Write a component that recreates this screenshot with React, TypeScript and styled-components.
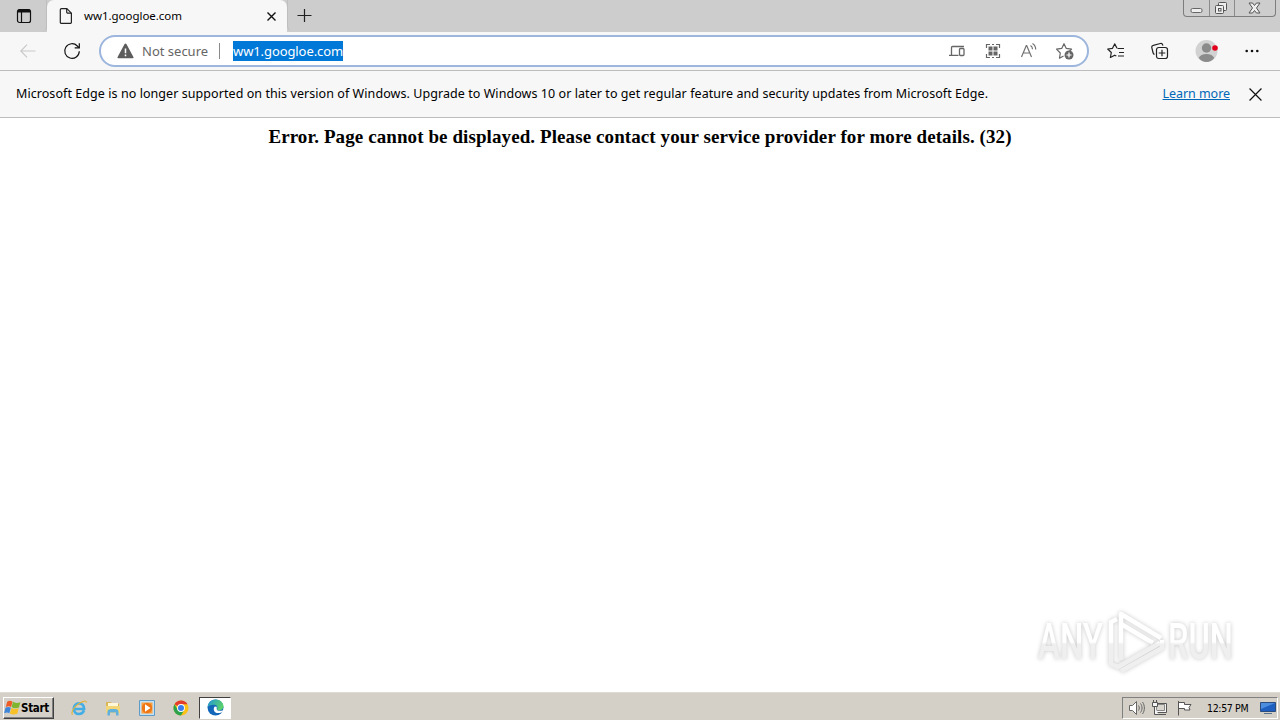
import React from 'react';
import styled, { createGlobalStyle } from 'styled-components';

const GlobalStyle = createGlobalStyle`
  * {
    box-sizing: border-box;
  }
  body {
    margin: 0;
    overflow: hidden;
    background: #fff;
  }
  svg {
    display: block;
    flex: none;
  }
`;
const Desktop = styled.div`
  width: 1280px;
  height: 720px;
  display: flex;
  flex-direction: column;
  font-family: 'Noto Sans', 'Open Sans', sans-serif;
  color: #000;
`;
const TabStrip = styled.div`
  height: 32px;
  display: flex;
  align-items: flex-start;
  background: #cdcdcd;
`;
const TabActions = styled.div`
  width: 47px;
  height: 32px;
  padding: 8px 0 0 16px;
  border-bottom-right-radius: 5px;
  border-right: 1px solid #bebebe;
`;
const Tab = styled.div`
  width: 240px;
  height: 32px;
  display: flex;
  align-items: center;
  padding: 0 9px 0 11px;
  background: #f7f7f7;
  border-radius: 7px 7px 0 0;
`;
const TabTitle = styled.span`
  flex: 1;
  margin-left: 10px;
  font-size: 11.5px;
  line-height: 16px;
  letter-spacing: -0.04px;
`;
const NewTab = styled.div`
  flex: 1;
  height: 31px;
  padding: 8px 0 0 9px;
  border-left: 1px solid #bebebe;
  border-bottom-left-radius: 5px;
`;
const WindowButtons = styled.div`
  width: 93px;
  height: 17px;
  margin-right: 4px;
  display: flex;
  border: 1px solid #7d7d7d;
  border-top: none;
  border-radius: 0 0 4px 4px;
`;
const WindowButton = styled.div<{ $width: number }>`
  width: ${props => props.$width}px;
  display: flex;
  justify-content: center;
  & + & {
    border-left: 1px solid #8b8b8b;
  }
`;
const Toolbar = styled.div`
  height: 39px;
  display: flex;
  align-items: center;
  background: #f7f7f7;
  border-bottom: 1px solid #bdbdbd;
  padding: 0 20px;
`;
const Reload = styled.div`
  margin: 0 18px 0 27px;
`;
const AddressBar = styled.div`
  width: 990px;
  height: 32px;
  display: flex;
  align-items: center;
  padding: 0 12px 0 16px;
  background: #fff;
  border: 2px solid #9db6dd;
  border-radius: 16px;
`;
const Security = styled.span`
  width: 78px;
  height: 16px;
  margin-left: 8px;
  display: flex;
  align-items: center;
  white-space: nowrap;
  color: #666;
  font-size: 13px;
  border-right: 1px solid #8a8a8a;
`;
const Url = styled.span`
  width: 110px;
  height: 20px;
  margin-left: 13px;
  background: #0078d7;
  color: #fff;
  font-size: 13px;
  line-height: 20px;
  letter-spacing: -0.09px;
  white-space: nowrap;
`;
const AddressIcons = styled.div`
  margin-left: auto;
  display: flex;
  gap: 16px;
`;
const ToolbarIcons = styled.div`
  margin-left: 17px;
  display: flex;
  align-items: center;
`;
const ToolbarIcon = styled.div<{ $gap?: number }>`
  margin-left: ${props => props.$gap || 0}px;
`;
const InfoBar = styled.div`
  height: 47px;
  display: flex;
  align-items: center;
  padding: 0 18px 0 16px;
  background: #f7f7f7;
  border-bottom: 1px solid #bdbdbd;
  font-size: 12.5px;
  line-height: 18px;
  white-space: nowrap;
`;
const InfoText = styled.span`
  flex: 1;
  letter-spacing: 0.065px;
`;
const LearnMore = styled.a`
  margin-right: 19px;
  color: #0067b8;
  letter-spacing: -0.05px;
  text-decoration: underline;
`;
const Page = styled.main`
  height: 574px;
  padding-top: 8px;
  position: relative;
  background: #fff;
`;
const Message = styled.h1`
  margin: 0;
  text-align: center;
  font-family: 'Liberation Serif', serif;
  font-size: 19px;
  line-height: 22px;
  letter-spacing: 0.09px;
  white-space: nowrap;
`;
const Watermark = styled.div`
  position: absolute;
  right: 0;
  bottom: 12px;
`;
const Taskbar = styled.div`
  height: 28px;
  display: flex;
  align-items: center;
  padding: 2px 2px 0 3px;
  background: #d4d0c8;
  border-top: 1px solid #dedbd5;
  font-family: 'DejaVu Sans Condensed', 'DejaVu Sans', sans-serif;
`;
const StartButton = styled.div`
  width: 51px;
  height: 22px;
  display: flex;
  align-items: center;
  border: 1px solid;
  border-color: #fff #404040 #404040 #fff;
  box-shadow: inset -1px -1px #808080;
  font-size: 11.5px;
  font-weight: bold;
  letter-spacing: -0.3px;
`;
const QuickLaunch = styled.div`
  display: flex;
  align-items: center;
  gap: 18px;
  margin-left: 17px;
`;
const ActiveTask = styled.div`
  width: 32px;
  height: 22px;
  margin-left: 10px;
  padding: 1px 0 0 7px;
  background: #fff;
  border: 1px solid;
  border-color: #404040 #fff #fff #404040;
`;
const Tray = styled.div`
  width: 156px;
  height: 22px;
  margin-left: auto;
  display: flex;
  align-items: center;
  padding-left: 5px;
  border: 1px solid;
  border-color: #808080 #fff #fff #808080;
`;
const Clock = styled.span`
  width: 46px;
  margin: 0 7px 0 11px;
  font-family: 'DejaVu Sans Condensed', 'DejaVu Sans', sans-serif;
  font-size: 10.5px;
  line-height: 16px;
  letter-spacing: -0.35px;
  white-space: nowrap;
`;

const CloseIcon = ({ size, stroke = 1.2 }: { size: number; stroke?: number }) => (
  <svg width={size} height={size} viewBox="0 0 12 12" fill="none" stroke="#111" strokeWidth={stroke}>
    <path d="M.5.5l11 11M11.5.5l-11 11" />
  </svg>
);

const PersonIcon = () => (
  <svg width="24" height="24" viewBox="0 0 24 24">
    <circle cx="11.5" cy="12" r="11" fill="#d2d2d2" />
    <circle cx="11.5" cy="9" r="4.7" fill="#8b8b8b" />
    <path d="M3.8 19c1-2.700 4-4 7.700-4s6.700 1.300 7.700 4c-4 5.300-11.500 5.300-15.400 0z" fill="#8b8b8b" />
    <circle cx="20" cy="9" r="2.800" fill="#e3001b" />
  </svg>
);

const WindowsLogo = () => (
  <svg width="17" height="17" viewBox="0 0 16 16">
    <path d="M3 2.500c2-1.200 3.500-1 5 0L6.700 7.600c-1.500-1-3-1-5 0z" fill="#ef5b25" />
    <path d="M8.400 2.700c2 1.200 4.200 1.300 7 .3l-1.300 5c-2.600 1.100-4.800 1-6.900-.3z" fill="#7fb52f" />
    <path d="M1.400 8.300c2-1.100 3.500-1 5 0L5.100 13.500c-1.500-1-3-1-5 0z" fill="#3f86d8" />
    <path d="M7 8.500c2 1.200 4.300 1.300 6.900.2L12.500 13.800c-2.600 1.100-4.800 1-6.900-.2z" fill="#f8c128" />
  </svg>
);

const ExplorerIcon = () => (
  <svg width="16" height="16" viewBox="0 0 16 16" fill="none">
    <path d="M13 10.600c-1 2.400-2.800 3.400-5 3.400-3 0-5.200-2.200-5.200-5.300S5 3.400 8 3.400s5.200 2.200 5.100 5.600H4" stroke="#43aee6" strokeWidth="2.700" />
    <path d="M1.500 14.700C-.5 12 3.500 6.500 8 3.500S15.700.2 15.300 2.700" stroke="#dfb43d" strokeWidth="1.200" />
  </svg>
);

const FolderIcon = () => (
  <svg width="16" height="16" viewBox="0 0 16 16">
    <path d="M1 2h5l1 1.500h7V13H1z" fill="#d9b757" />
    <path d="M3 3h10v3H3z" fill="#fff8d8" />
    <path d="M1 6h14v7H1z" fill="#f3d678" />
    <path d="M2.500 15.500v-4C2.500 9.500 4.500 9 8 9s5.500.5 5.500 2.500v4H11v-3H5v3z" fill="#5fb0dc" />
  </svg>
);

const MediaIcon = () => (
  <svg width="16" height="16" viewBox="0 0 16 16">
    <path d="M.5.500h15v15H.5z" fill="#c4e0f2" stroke="#5d9cc9" />
    <path d="M2.500 2.500h11v11h-11z" fill="#f9a040" />
    <circle cx="8" cy="8" r="5.200" fill="#ee7615" />
    <path d="M6 4.200L11.500 8 6 11.800z" fill="#fff" />
  </svg>
);

const ChromeIcon = () => (
  <svg width="16" height="16" viewBox="0 0 16 16">
    <circle cx="8" cy="8" r="7.500" fill="#fbc116" />
    <path d="M8 8L1.500 4.250A7.500 7.500 0 0 1 14.500 4.250H8z" fill="#e33b2e" />
    <path d="M1.500 4.250A7.500 7.500 0 0 0 8 15.500l3.200-5.600L8 8 4.800 9.900z" fill="#2ba24c" />
    <circle cx="8" cy="8" r="3.900" fill="#fff" />
    <circle cx="8" cy="8" r="3" fill="#3b7ded" />
  </svg>
);

const EdgeIcon = () => (
  <svg width="17" height="17" viewBox="0 0 17 17">
    <defs>
      <linearGradient id="edge-wave" x1="0" y1="0" x2="1" y2=".4">
        <stop offset="0" stopColor="#2196dc" />
        <stop offset="1" stopColor="#5ad06c" />
      </linearGradient>
    </defs>
    <circle cx="8.500" cy="8.500" r="8" fill="#1267b8" />
    <path d="M.6 8C1 3.500 4.500.5 8.700.5c4.800 0 7.800 3.500 7.800 6.700 0 2.600-2 4.100-4.200 4.100-1.600 0-2.500-.6-2.200-1.300.8-1.200.3-3.900-2.700-4.200C4 5.500 1.400 7 .6 8z" fill="url(#edge-wave)" />
    <path d="M7.800 7.400C5.500 9.800 7.200 14 11 14c2 0 3.500-.5 4.700-1.300L17 11c-1.700 1.200-7.300 1.400-7.300-1.100 0-1 .3-1.500-.2-2.200z" fill="#fff" />
  </svg>
);

const AnyRunLogo = () => (
  <svg
    width="250"
    height="76"
    viewBox="0 0 250 76"
    fill="url(#fade)"
    fontFamily="Roboto, sans-serif"
    fontSize="50"
    fontWeight="500"
    style={{ filter: 'drop-shadow(0 0 2px rgba(0,0,0,.22))' }}
  >
    <defs>
      <linearGradient id="fade" gradientUnits="userSpaceOnUse" x1="0" y1="0" x2="0" y2="76">
        <stop offset=".5" stopColor="#fff" />
        <stop offset=".53" stopColor="#efefef" />
      </linearGradient>
    </defs>
    <text x="8" y="55" textLength="65" lengthAdjust="spacingAndGlyphs">ANY</text>
    <text x="138" y="55" textLength="65" lengthAdjust="spacingAndGlyphs">RUN</text>
    <g fill="none" stroke="url(#fade)" strokeWidth="4.5" strokeLinejoin="round">
      <path d="M91 56V10l40 24" />
      <path d="M91 20l32 19" />
      <path d="M87 15l-6 3v42l7 3 42-24" />
      <path d="M91 67l41-23v-8" />
    </g>
  </svg>
);

const App = () => (
  <Desktop>
    <GlobalStyle />
    <TabStrip>
      <TabActions>
        <svg width="16" height="16" viewBox="0 0 16 16" fill="none" stroke="#111" strokeWidth="1.200">
          <rect x="1.500" y="1.500" width="13" height="13" rx="2" />
          <path d="M5.500 4v10.500" />
          <path d="M2 3h12" strokeWidth="3" />
        </svg>
      </TabActions>
      <Tab>
        <svg width="16" height="16" viewBox="0 0 16 16" fill="none" stroke="#222" strokeWidth="1.200">
          <path d="M3.500.600h5.300l4.600 4.600v9a1.200 1.200 0 0 1-1.200 1.200H3.500a1.200 1.200 0 0 1-1.200-1.200V1.800A1.200 1.200 0 0 1 3.500.600z" />
          <path d="M8.700.700V4a1.200 1.200 0 0 0 1.200 1.200h3.400" />
        </svg>
        <TabTitle>ww1.googloe.com</TabTitle>
        <svg width="14" height="12" viewBox="0 0 14 12" stroke="#111" strokeWidth="1.400">
          <path d="M3.500 2.500l8 8M11.500 2.500l-8 8" />
        </svg>
      </Tab>
      <NewTab>
        <svg width="15" height="15" viewBox="0 0 15 15" stroke="#222" strokeWidth="1.200">
          <path d="M7.500 1v13M.5 7.500h14" />
        </svg>
      </NewTab>
      <WindowButtons>
        <WindowButton $width={25}>
          <svg width="13" height="16" viewBox="0 0 13 16">
            <rect x="1" y="8.500" width="11" height="4" rx="1.500" fill="#eee" stroke="#666" />
          </svg>
        </WindowButton>
        <WindowButton $width={25}>
          <svg width="14" height="16" viewBox="0 0 14 16" fill="#eee" stroke="#555">
            <rect x="3.500" y="2.500" width="8" height="8" rx="1" />
            <rect x=".5" y="5.500" width="8" height="8" rx="1" />
            <rect x="3.500" y="8.500" width="2.500" height="2.500" />
          </svg>
        </WindowButton>
        <WindowButton $width={41}>
          <svg width="14" height="16" viewBox="0 0 14 16">
            <path d="M1 3h3.500L6.500 5.500 8.500 3H12L8.500 8l3.500 5H8.500l-2-2.500-2 2.500H1l3.500-5z" fill="#eee" stroke="#555" />
          </svg>
        </WindowButton>
      </WindowButtons>
    </TabStrip>
    <Toolbar>
      <svg width="16" height="16" viewBox="0 0 16 16" fill="none" stroke="#c9c9c9" strokeWidth="1.200">
        <path d="M15.500 8H1M7 1.700L.8 8 7 14.300" />
      </svg>
      <Reload>
        <svg width="18" height="18" viewBox="0 0 18 18" fill="none" stroke="#111" strokeWidth="1.200">
          <path d="M16.300 9.200a7.300 7.300 0 1 1-2-5.200l1.700 1.700" />
          <path d="M16.300 1.300v4.500h-4.600" />
        </svg>
      </Reload>
      <AddressBar>
        <svg width="17" height="16" viewBox="0 0 17 16">
          <path d="M7.600 1.100a1 1 0 0 1 1.800 0l7 12.800a.9.900 0 0 1-.8 1.300H1.400a.9.900 0 0 1-.8-1.300z" fill="#5c5c5c" />
          <path d="M8.500 5.500v4.800M8.500 11.500v1.700" stroke="#fff" strokeWidth="1.500" />
        </svg>
        <Security>Not secure</Security>
        <Url>ww1.googloe.com</Url>
        <AddressIcons>
          <svg width="20" height="20" viewBox="0 0 20 20" fill="none" stroke="#666" strokeWidth="1.300">
            <path d="M4.500 14V6.500a1 1 0 0 1 1-1H17M2 14.400h9.500" />
            <rect x="12.500" y="7.500" width="4.500" height="7" rx="1" />
          </svg>
          <svg width="20" height="20" viewBox="0 0 20 20" fill="none" stroke="#666" strokeWidth="1.200">
            <path d="M3.500 7V3.500H7M13 3.500h3.500V7M16.500 13v3.500H13M7 16.500H3.500V13M9 3.500h2M9 16.500h2" />
            <path d="M5.500 5.500h4v4h-4zM10.500 5.500h4v4h-4zM5.500 10.500h4v4h-4zM10.500 10.500h4v4h-4z" fill="#666" stroke="none" />
          </svg>
          <svg width="20" height="20" viewBox="0 0 20 20" fill="none" stroke="#707070" strokeWidth="1.200">
            <path d="M2.500 16L7.300 4.500h.4L12.500 16M4.200 12h6.600" />
            <path d="M11.500 4.500c1.300.8 2 2 2 3.700M13.500 2.500c2 1.200 3.200 3.200 3.200 6" />
          </svg>
          <svg width="20" height="20" viewBox="0 0 20 20" fill="none" stroke="#666" strokeWidth="1.200">
            <path d="M8.500 15l-4 2.200.8-5.200L1.500 8.200l5.200-.8L9 2.700l2.300 4.700 5.200.8-2 1.800" strokeLinejoin="round" />
            <circle cx="14" cy="14" r="4.500" fill="#666" stroke="none" />
            <path d="M14 11.500v5M11.500 14h5" stroke="#fff" />
          </svg>
        </AddressIcons>
      </AddressBar>
      <ToolbarIcons>
        <ToolbarIcon>
          <svg width="20" height="20" viewBox="0 0 20 20" fill="none" stroke="#222" strokeWidth="1.200" strokeLinejoin="round">
            <path d="M11.500 7.500h6.500M13 11.500h5M12 15h6" />
            <path d="M11 7.200L8.700 2.900 6.500 7.300l-4.800.7 3.600 3.500-.9 5 4.300-2.300 1.600.9" />
          </svg>
        </ToolbarIcon>
        <ToolbarIcon $gap={24}>
          <svg width="20" height="20" viewBox="0 0 20 20" fill="none" stroke="#222" strokeWidth="1.200">
            <path d="M4.500 13.500A3 3 0 0 1 3 11.500L1.800 6.700a2 2 0 0 1 1.500-2.400l7-1.800a2 2 0 0 1 2.400 1.400l.2.800" />
            <rect x="6.500" y="6.500" width="11" height="11" rx="2.200" />
            <path d="M12 8.700v6.600M8.700 12h6.600" />
          </svg>
        </ToolbarIcon>
        <ToolbarIcon $gap={25}>
          <PersonIcon />
        </ToolbarIcon>
        <ToolbarIcon $gap={26}>
          <svg width="14" height="4" viewBox="0 0 14 4" fill="#111">
            <circle cx="1.700" cy="2" r="1.300" />
            <circle cx="7" cy="2" r="1.300" />
            <circle cx="12.300" cy="2" r="1.300" />
          </svg>
        </ToolbarIcon>
      </ToolbarIcons>
    </Toolbar>
    <InfoBar>
      <InfoText>
        Microsoft Edge is no longer supported on this version of Windows. Upgrade to Windows 10 or later to get regular feature and security updates from Microsoft Edge.
      </InfoText>
      <LearnMore>Learn more</LearnMore>
      <CloseIcon size={13} stroke={1.1} />
    </InfoBar>
    <Page>
      <Message>Error. Page cannot be displayed. Please contact your service provider for more details. (32)</Message>
      <Watermark>
        <AnyRunLogo />
      </Watermark>
    </Page>
    <Taskbar>
      <StartButton>
        <WindowsLogo />
        Start
      </StartButton>
      <QuickLaunch>
        <ExplorerIcon />
        <FolderIcon />
        <MediaIcon />
        <ChromeIcon />
      </QuickLaunch>
      <ActiveTask>
        <EdgeIcon />
      </ActiveTask>
      <Tray>
        <svg width="18" height="16" viewBox="0 0 18 16" fill="none" stroke="#666">
          <path d="M1.500 5.500h3l4-4v13l-4-4h-3z" fill="#fff" />
          <path d="M10.500 5.500c1 1.500 1 3.500 0 5M12.500 3.500c2 2.500 2 6.500 0 9M14.500 2c2.500 3.500 2.500 8.500 0 12" />
        </svg>
        <svg width="24" height="16" viewBox="0 0 24 16" fill="#f4f4f4" stroke="#555">
          <path d="M8.500 3.500h12v9h-12z" />
          <path d="M10.500 4.500h8v6h-8z" fill="#d8d5ce" stroke="#888" />
          <path d="M11 14.500h9" />
          <path d="M7.500 0v3M10.500 0v3M6.500 2.500h5v4h-5zM8.500 6.500v8h4" />
        </svg>
        <svg width="26" height="16" viewBox="0 0 26 16" fill="#fff" stroke="#555">
          <path d="M8.500 1v14.500M8.500 2.500h6v2h6.500l-2 3 1 2.500h-5.500v-1.500h-6z" />
        </svg>
        <Clock>12:57 PM</Clock>
        <svg width="16" height="14" viewBox="0 0 16 14">
          <path d="M.5 1.500h15v9H.5z" fill="#1f5fc0" stroke="#2b4c7c" />
          <path d="M1 2h14L1 8z" fill="#4c8de0" />
          <path d="M4 12.500h8" stroke="#57718e" />
        </svg>
      </Tray>
    </Taskbar>
  </Desktop>
);
export default App;
